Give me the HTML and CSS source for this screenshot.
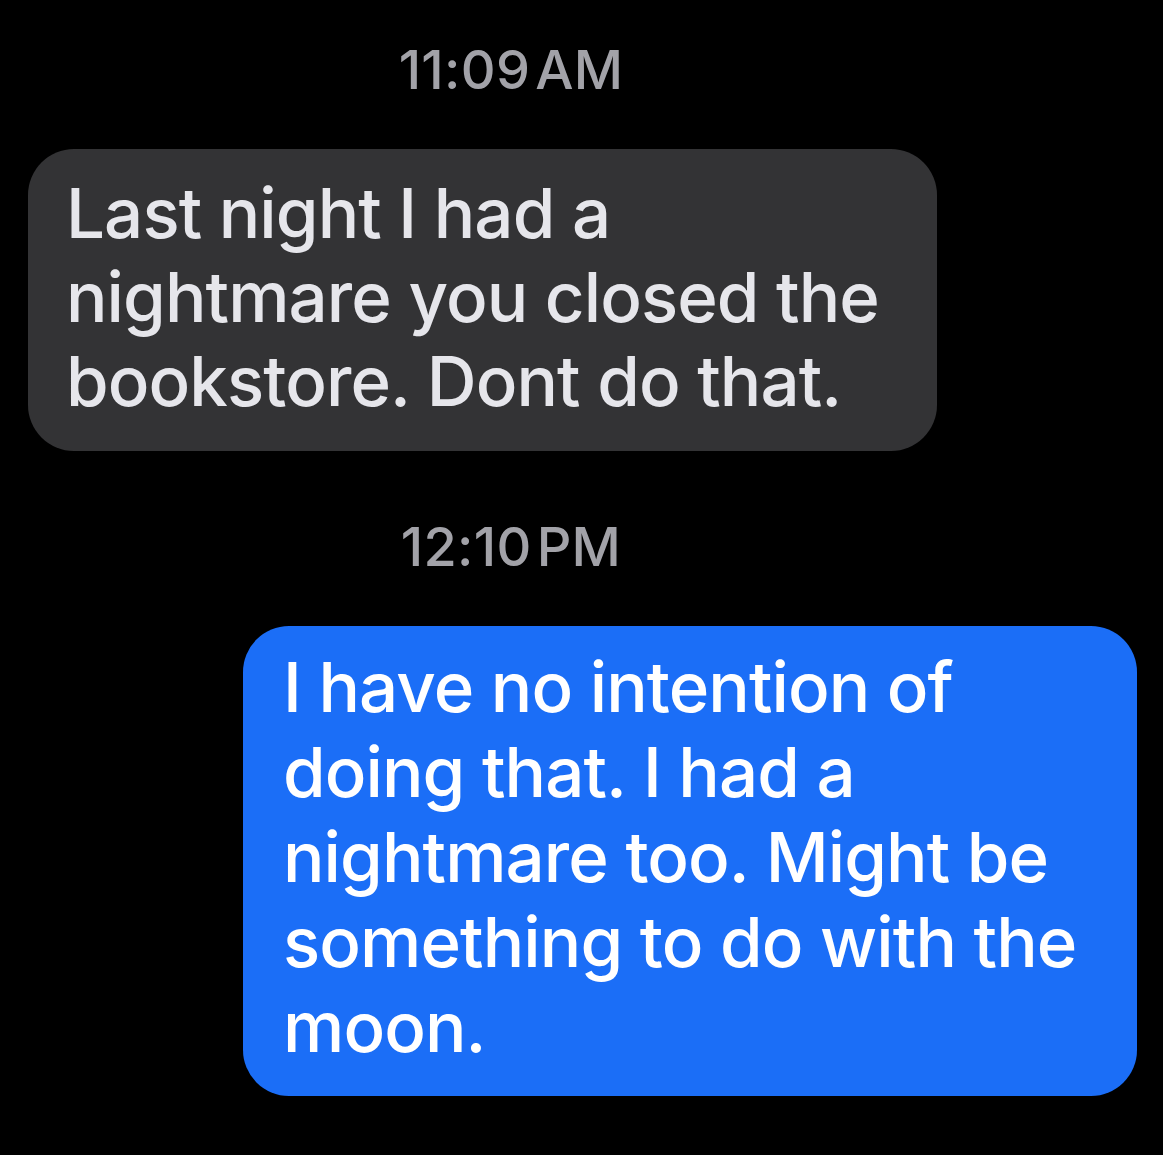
FILE: index.html
```html
<!DOCTYPE html>
<html lang="en">
<head>
<meta charset="utf-8">
<title>Messages</title>
<link rel="stylesheet" href="styles.css">
</head>
<body>
<main class="thread">
  <div class="stamp stamp-first">11:09&#8202;AM</div>
  <div class="row row-in">
    <div class="bubble bubble-in">Last night I had a<br>nightmare you closed the<br>bookstore. Dont do that.</div>
  </div>
  <div class="stamp stamp-second">12:10&#8202;PM</div>
  <div class="row row-out">
    <div class="bubble bubble-out">I have no intention of<br>doing that. I had a<br>nightmare too. Might be<br>something to do with the<br>moon.</div>
  </div>
</main>
</body>
</html>
```
FILE: styles.css
```css
html, body {
  margin: 0;
  padding: 0;
  background: #000;
}
body {
  width: 1163px;
  height: 1155px;
  overflow: hidden;
  font-family: Inter, "Noto Sans", "Liberation Sans", sans-serif;
}
.thread {
  display: flex;
  flex-direction: column;
  padding-top: 40px;
}
.stamp {
  font-size: 54px;
  line-height: 60px;
  font-weight: 500;
  color: #a2a2a8;
  text-align: center;
  padding-right: 141px;
  letter-spacing: 0.3px;
}
.stamp-first { margin-bottom: 49px; }
.stamp-second { margin-top: 66px; margin-bottom: 49px; }
.row { display: flex; }
.row-in { justify-content: flex-start; padding-left: 28px; }
.row-out { justify-content: flex-end; padding-right: 26px; }
.bubble {
  font-size: 69px;
  font-weight: 500;
  letter-spacing: -0.9px;
  border-radius: 46px;
  box-sizing: border-box;
}
.bubble-in {
  width: 909px;
  background: #333335;
  color: #e6e6eb;
  line-height: 84px;
  padding: 22px 30px 28px 38px;
}
.bubble-out {
  width: 894px;
  background: #1b6ef7;
  color: #fff;
  line-height: 85px;
  padding: 19px 30px 26px 40px;
}
```
